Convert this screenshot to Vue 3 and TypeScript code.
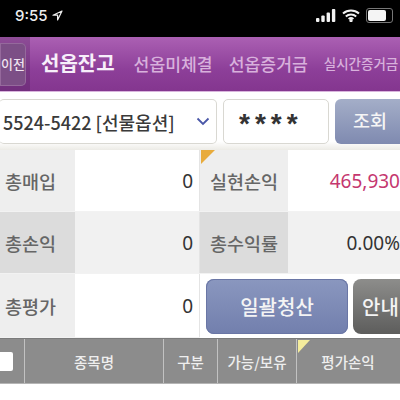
<script setup lang="ts">
const headers = [
  { label: '종목명', width: 139 },
  { label: '구분', width: 54 },
  { label: '가능/보유', width: 79 },
  { label: '평가손익', width: 103, flag: true },
];

const leftRows = [
  { label: '총매입', value: '0', shade: false },
  { label: '총손익', value: '0', shade: true },
  { label: '총평가', value: '0', shade: false },
];

const rightRows = [
  { label: '실현손익', value: '465,930', shade: false, profit: true, flag: true },
  { label: '총수익률', value: '0.00%', shade: true },
];
</script>

<template>
  <div class="screen">
    <div class="status">
      <div class="time">
        9:55
        <svg width="11" height="11" viewBox="0 0 11 11"><path d="M10 1 1 5.2h4.6V10z" fill="none" stroke="#eee" stroke-width="1.2" stroke-linejoin="round" /></svg>
      </div>
      <div class="status-icons">
        <svg width="20" height="13" viewBox="0 0 20 13" fill="#f2f2f2">
          <rect x="0" y="9" width="3.4" height="4" rx="1" />
          <rect x="5.3" y="6.5" width="3.4" height="6.5" rx="1" />
          <rect x="10.6" y="3.5" width="3.4" height="9.5" rx="1" />
          <rect x="15.9" y="0" width="3.4" height="13" rx="1" />
        </svg>
        <svg width="18" height="13" viewBox="0 0 18 13" fill="none" stroke="#f2f2f2" stroke-width="2">
          <path d="M1 4.6C5.6.5 12.4.5 17 4.6" />
          <path d="M3.8 7.4c3-2.6 7.4-2.6 10.4 0" />
          <path d="M6.6 10c1.4-1.1 3.4-1.1 4.8 0" />
          <circle cx="9" cy="11.5" r=".7" fill="#f2f2f2" />
        </svg>
        <div class="battery"><span></span></div>
      </div>
    </div>

    <div class="nav">
      <div class="back-wrap"><div class="back">이전</div></div>
      <div class="tab active">선옵잔고</div>
      <div class="tab">선옵미체결</div>
      <div class="tab">선옵증거금</div>
      <div class="tab small">실시간증거금</div>
    </div>

    <div class="toolbar">
      <div class="select">
        <span>5524-5422 [선물옵션]</span>
        <svg width="14" height="9" viewBox="0 0 14 9"><path d="M1.5 1.5 7 7l5.5-5.5" fill="none" stroke="#4a57a8" stroke-width="1.8" /></svg>
      </div>
      <div class="password">****</div>
      <div class="query">조회</div>
    </div>

    <div class="summary">
      <div class="col left">
        <div v-for="row in leftRows" :key="row.label" class="row" :class="{ shade: row.shade }">
          <div class="label">{{ row.label }}</div>
          <div class="value">{{ row.value }}</div>
        </div>
      </div>
      <div class="col right">
        <div v-for="row in rightRows" :key="row.label" class="row" :class="{ shade: row.shade }">
          <div class="label">
            <i v-if="row.flag" class="flag orange"></i>
            {{ row.label }}
          </div>
          <div class="value" :class="{ profit: row.profit }">{{ row.value }}</div>
        </div>
        <div class="row actions">
          <div class="btn settle">일괄청산</div>
          <div class="btn guide">안내</div>
        </div>
      </div>
    </div>

    <div class="thead">
      <div class="th check"><span></span></div>
      <div v-for="h in headers" :key="h.label" class="th" :style="{ width: h.width + 'px' }">
        <i v-if="h.flag" class="flag yellow"></i>
        {{ h.label }}
      </div>
    </div>
  </div>
</template>

<style scoped>
.screen {
  width: 400px;
  height: 400px;
  overflow: hidden;
  background: #fff;
  font-family: "Noto Sans CJK KR", "Noto Sans", sans-serif;
}

.status {
  height: 37px;
  background: #000;
  display: flex;
  justify-content: space-between;
  align-items: center;
  padding: 0 7px 6px 15px;
  box-sizing: border-box;
}

.time {
  display: flex;
  align-items: center;
  gap: 4px;
  color: #eee;
  font-family: "Inter", "Liberation Sans", sans-serif;
  font-size: 15px;
  font-weight: 500;
}

.status-icons {
  display: flex;
  align-items: center;
  gap: 6px;
}

.battery {
  width: 23px;
  height: 11px;
  border: 1px solid #777;
  border-radius: 3px;
  padding: 1px;
  box-sizing: content-box;
}

.battery span {
  display: block;
  width: 18px;
  height: 11px;
  background: #f4f4f4;
  border-radius: 2px;
}

.nav {
  height: 55px;
  display: flex;
  align-items: center;
  background: linear-gradient(#ab60b3, #8d3f99 60%, #84368f);
  border-bottom: 1px solid #d9b5dd;
  box-sizing: border-box;
  white-space: nowrap;
  overflow: hidden;
}

.back-wrap {
  width: 30px;
  height: 100%;
  flex: none;
  background: rgba(70, 30, 80, 0.28);
  display: flex;
  align-items: center;
}

.back {
  width: 26px;
  height: 43px;
  flex: none;
  background: #7c4f86;
  border-radius: 0 5px 5px 0;
  color: #efe3f0;
  font-size: 13px;
  font-weight: 500;
  line-height: 42px;
  text-align: center;
  box-shadow: inset 0 0 0 1px #95699c;
}

.tab {
  flex: none;
  margin: 0 0 2px 16px;
  color: #d8b1dc;
  font-size: 17.2px;
  font-weight: 500;
}

.tab.small {
  font-size: 13.5px;
}

.tab.active {
  margin: 0 3px 3px 11px;
  color: #f7effa;
  font-size: 20px;
  font-weight: 700;
}

.toolbar {
  height: 58px;
  display: flex;
  align-items: flex-start;
  gap: 6px;
  padding-top: 7px;
  box-sizing: border-box;
  background: linear-gradient(#fff 85%, #ecebe6);
}

.select,
.password {
  height: 45px;
  background: #fff;
  border: 1px solid #d9d8d2;
  border-radius: 5px;
  box-sizing: border-box;
  display: flex;
  align-items: center;
}

.select {
  width: 218px;
  margin-left: -1px;
  flex: none;
  justify-content: space-between;
  padding: 0 6px 0 4px;
  color: #3a3a3a;
  font-size: 18px;
  font-weight: 500;
  border-left: none;
}

.select span {
  white-space: nowrap;
}

.password {
  width: 106px;
  flex: none;
  padding: 5px 0 0 15px;
  color: #333;
  font-family: "Liberation Sans", sans-serif;
  font-size: 28px;
  font-weight: 700;
  letter-spacing: 5px;
}

.query {
  width: 80px;
  height: 45px;
  flex: none;
  background: linear-gradient(#a4aec8, #7f8ab0);
  border-radius: 6px 0 0 6px;
  color: #f5f5f5;
  font-size: 18.5px;
  font-weight: 500;
  line-height: 42px;
  padding-left: 18px;
  box-sizing: border-box;
}

.summary {
  display: flex;
  height: 188px;
}

.col {
  display: flex;
  flex-direction: column;
  width: 200px;
  flex: none;
  min-width: 0;
  overflow: hidden;
}

.row {
  height: 62px;
  display: flex;
  flex: none;
  border-bottom: 1px solid #f2f2f2;
  box-sizing: border-box;
}

.row:last-child {
  height: 64px;
}

.label {
  position: relative;
  flex: none;
  background: #eeeeee;
  color: #666;
  font-size: 18.5px;
  font-weight: 500;
  display: flex;
  align-items: center;
}

.left .label {
  width: 75px;
  padding-left: 5px;
  box-sizing: border-box;
}

.right .label {
  width: 88px;
  padding-left: 10px;
  box-sizing: border-box;
}

.value {
  flex: 1;
  min-width: 0;
  display: flex;
  align-items: center;
  justify-content: flex-end;
  padding-right: 6px;
  background: #fff;
  color: #333;
  font-family: "Noto Sans", sans-serif;
  font-size: 19px;
}

.left .value {
  border-right: 1px solid #e4e4e4;
}

.right .value {
  padding-right: 0;
  white-space: nowrap;
}

.right .value.profit {
  color: #c5376f;
}

.shade .label {
  background: #dcdcdc;
}

.shade .value {
  background: #f1f1f1;
}

.flag {
  position: absolute;
  top: 0;
  width: 0;
  height: 0;
  border-style: solid;
  border-width: 14px 14px 0 0;
  border-color: #e8ab3c transparent transparent transparent;
}

.label .flag {
  left: 1px;
}

.flag.yellow {
  left: 1px;
  top: 1px;
  border-width: 13px 12px 0 0;
  border-color: #f4ec9c transparent transparent transparent;
}

.actions {
  align-items: flex-start;
  gap: 5px;
  padding: 5px 0 0 6px;
  border: none;
  background: #fff;
}

.btn {
  height: 55px;
  flex: none;
  display: flex;
  align-items: center;
  color: #f4f4f4;
  font-size: 20px;
  font-weight: 500;
}

.settle {
  width: 142px;
  justify-content: center;
  border-radius: 8px;
  background: linear-gradient(#8a97bf, #727fad);
  box-shadow: inset 0 0 0 1px #6a76a5;
}

.guide {
  width: 47px;
  padding-left: 9px;
  box-sizing: border-box;
  border-radius: 8px 0 0 8px;
  background: linear-gradient(#8d8d8b, #5d5d5c);
  white-space: nowrap;
}

.thead {
  height: 46px;
  display: flex;
  background: #8c8c8c;
  border-top: 1px solid #7b7b7b;
  border-bottom: 1px solid #b5b5b5;
  box-sizing: border-box;
}

.th {
  position: relative;
  flex: none;
  box-sizing: border-box;
  border-left: 1px solid #c2c2c2;
  display: flex;
  align-items: center;
  justify-content: center;
  color: #eee;
  font-size: 14.5px;
  font-weight: 500;
  white-space: nowrap;
}

.check {
  width: 24px;
  border-left: none;
  justify-content: flex-start;
}

.check span {
  width: 13px;
  height: 19px;
  background: #fff;
  border-radius: 0 2px 2px 0;
}
</style>
